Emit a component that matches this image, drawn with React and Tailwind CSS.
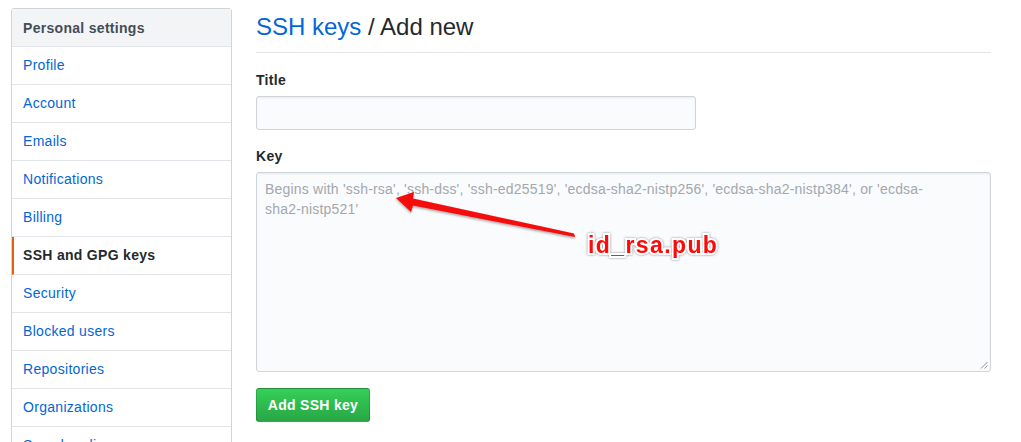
import React from "react";

const items = [
  "Profile",
  "Account",
  "Emails",
  "Notifications",
  "Billing",
  "SSH and GPG keys",
  "Security",
  "Blocked users",
  "Repositories",
  "Organizations",
  "Saved replies",
  "Applications",
];

function Sidebar() {
  return (
    <nav className="w-[221px] shrink-0 self-start rounded-[3px] border border-[#d1d5da] bg-white text-[14px] tracking-[0.3px]">
      <div className="h-[38px] border-b border-[#e1e4e8] bg-[#f3f4f6] pl-[11px] leading-[38px] font-bold text-[#444d56]">
        Personal settings
      </div>
      {items.map((item) => {
        const active = item === "SSH and GPG keys";
        return (
          <div
            key={item}
            className={
              active
                ? "h-[38px] border-b border-l-2 border-b-[#e1e4e8] border-l-[#e36209] pl-[9px] leading-[37px] font-bold text-[#24292e]"
                : "h-[38px] border-b border-[#e1e4e8] pl-[11px] leading-[37px] text-[#0366d6]"
            }
          >
            {item}
          </div>
        );
      })}
    </nav>
  );
}

function Arrow() {
  return (
    <svg className="pointer-events-none absolute left-0 top-0" width="1021" height="442">
      <defs>
        <filter id="sh" x="-10%" y="-30%" width="120%" height="160%">
          <feDropShadow dx="0" dy="1.5" stdDeviation="1" floodColor="#000" floodOpacity="0.35" />
        </filter>
      </defs>
      <polygon
        filter="url(#sh)"
        fill="#f50c0c"
        points="396,198 414,192 413,198.5 574,233.5 575,237 413,205.5 411,212"
      />
    </svg>
  );
}

export default function App() {
  return (
    <div
      className="relative h-[442px] overflow-hidden bg-white"
      style={{ fontFamily: '"Liberation Sans", Arial, sans-serif' }}
    >
      <div className="flex gap-6 pl-[11px] pr-[30px] pt-2">
        <Sidebar />
        <main className="flex-1">
          <h2 className="mt-[4px] border-b border-[#e1e4e8] pb-[10px] text-[24px] leading-[30px] text-[#24292e]">
            <span className="text-[#0366d6]">SSH keys</span> / Add new
          </h2>
          <div className="mt-[17px] text-[14px] leading-[20px] font-bold tracking-[0.3px] text-[#24292e]">Title</div>
          <div className="mt-[6px] h-[34px] w-[440px] rounded-[3px] border border-[#d1d5da] bg-[#fafbfc] shadow-[inset_0_1px_2px_rgba(27,31,35,0.075)]" />
          <div className="mt-4 text-[14px] leading-[20px] font-bold tracking-[0.3px] text-[#24292e]">Key</div>
          <div className="relative mt-[6px] h-[200px] w-full rounded-[3px] border border-[#d1d5da] bg-[#fafbfc] px-2 pt-1.5 text-[14px] leading-[20px] tracking-[0.2px] text-[#a3a8ae] shadow-[inset_0_1px_2px_rgba(27,31,35,0.075)]">
            <div className="whitespace-nowrap">
              Begins with 'ssh-rsa', 'ssh-dss', 'ssh-ed25519', 'ecdsa-sha2-nistp256', 'ecdsa-sha2-nistp384', or 'ecdsa-
            </div>
            <div className="whitespace-nowrap">sha2-nistp521'</div>
            <svg className="absolute bottom-[2px] right-[2px]" width="8" height="8">
              <line x1="1" y1="7.5" x2="7.5" y2="1" stroke="#8a8f95" strokeWidth="1" />
              <line x1="4.5" y1="7.5" x2="7.5" y2="4.5" stroke="#8a8f95" strokeWidth="1" />
            </svg>
          </div>
          <button className="mt-4 h-[34px] w-[114px] rounded-[3px] border border-[rgba(27,31,35,0.2)] bg-gradient-to-b from-[#34d058] to-[#28a745] text-[14px] font-bold tracking-[0.3px] text-white">
            Add SSH key
          </button>
        </main>
      </div>
      <Arrow />
      <div className="absolute left-[588px] top-[230px] text-[23px] font-bold leading-[30px] tracking-[1.4px] text-[#ff0a0a] [paint-order:stroke_fill] [-webkit-text-stroke:4px_white] drop-shadow-[0_0_1px_rgba(0,0,0,0.45)]">
        id_rsa.pub
      </div>
    </div>
  );
}
